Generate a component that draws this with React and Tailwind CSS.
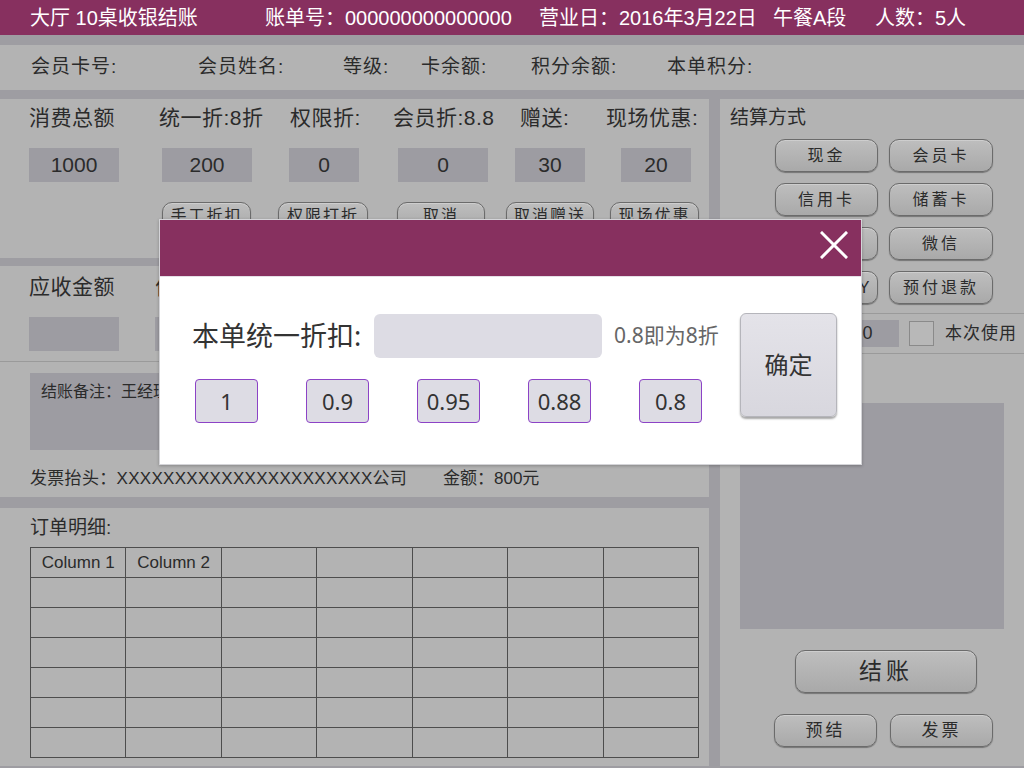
import React from 'react';

const bg = "font-['Liberation_Sans','Noto_Sans_CJK_SC',sans-serif]";
const modalFont = "font-['Noto_Sans','Noto_Sans_CJK_SC',sans-serif]";

function Pill({ children, className = '' }) {
  return (
    <div className={`flex items-center justify-center rounded-[10px] border border-[#6b6b6b] bg-gradient-to-b from-[#bebebe] to-[#a9a9a9] shadow-[0_1px_1px_rgba(0,0,0,0.35),inset_0_1px_0_rgba(255,255,255,0.25)] text-[#2b2b2b] ${className}`}>
      {children}
    </div>
  );
}

function ValueBox({ w, ml, children }) {
  return (
    <div className={`${w} ${ml} h-[34px] bg-[#9d9ca2] flex items-center justify-center text-[21px] text-[#2b2b2b]`}>{children}</div>
  );
}

export default function App() {
  const presets = ['1', '0.9', '0.95', '0.88', '0.8'];
  const rows = Array.from({ length: 7 });
  const cols = Array.from({ length: 7 });

  return (
    <div className={`relative w-[1024px] h-[768px] overflow-hidden bg-[#9e9da2] ${bg}`}>
      {/* header bar */}
      <div className="h-[35px] bg-[#87305f] flex items-center pl-[30px] text-white text-[20px] whitespace-nowrap">
        <span className="w-[235px]">大厅 10桌收银结账</span>
        <span className="w-[274px]">账单号：000000000000000</span>
        <span className="w-[234px]">营业日：2016年3月22日</span>
        <span className="w-[102px]">午餐A段</span>
        <span>人数：5人</span>
      </div>

      {/* member row */}
      <div className="mt-[10px] h-[45px] bg-[#b3b3b3] flex items-center pl-[31px] text-[19px] text-[#2b2b2b] tracking-[1px] whitespace-nowrap">
        <span className="w-[167px]">会员卡号:</span>
        <span className="w-[145px]">会员姓名:</span>
        <span className="w-[78px]">等级:</span>
        <span className="w-[110px]">卡余额:</span>
        <span className="w-[136px]">积分余额:</span>
        <span>本单积分:</span>
      </div>

      <div className="mt-[9px] flex">
        {/* left column */}
        <div className="w-[709px] flex flex-col">
          {/* panel A */}
          <div className="h-[159px] bg-[#b3b3b3] pt-[8px] text-[#2b2b2b]">
            <div className="flex h-[22px] items-center pl-[29px] text-[21px] tracking-[0.5px] whitespace-nowrap">
              <span className="w-[130px]">消费总额</span>
              <span className="w-[131px]">统一折:8折</span>
              <span className="w-[103px]">权限折:</span>
              <span className="w-[127px]">会员折:8.8</span>
              <span className="w-[86px]">赠送:</span>
              <span>现场优惠:</span>
            </div>
            <div className="mt-[19px] flex">
              <ValueBox w="w-[90px]" ml="ml-[29px]">1000</ValueBox>
              <ValueBox w="w-[90px]" ml="ml-[43px]">200</ValueBox>
              <ValueBox w="w-[70px]" ml="ml-[37px]">0</ValueBox>
              <ValueBox w="w-[90px]" ml="ml-[39px]">0</ValueBox>
              <ValueBox w="w-[70px]" ml="ml-[27px]">30</ValueBox>
              <ValueBox w="w-[70px]" ml="ml-[36px]">20</ValueBox>
            </div>
            <div className="mt-[20px] flex text-[16px] tracking-[2px]">
              <Pill className="ml-[162px] w-[89px] h-[28px]">手工折扣</Pill>
              <Pill className="ml-[27px] w-[90px] h-[28px]">权限打折</Pill>
              <Pill className="ml-[29px] w-[88px] h-[28px]">取消</Pill>
              <Pill className="ml-[21px] w-[88px] h-[28px]">取消赠送</Pill>
              <Pill className="ml-[16px] w-[89px] h-[28px]">现场优惠</Pill>
            </div>
          </div>

          {/* panel B */}
          <div className="mt-[8px] h-[231px] bg-[#b3b3b3] text-[#2b2b2b]">
            <div className="border-b border-[#9a9a9a] pb-[10px]">
              <div className="pt-[10px] flex h-[32px] items-end pl-[29px] text-[21px] tracking-[0.5px]">
                <span className="w-[126px] leading-[22px]">应收金额</span>
                <span className="leading-[22px]">优惠金额</span>
              </div>
              <div className="mt-[19px] flex">
                <ValueBox w="w-[90px]" ml="ml-[29px]"></ValueBox>
                <ValueBox w="w-[90px]" ml="ml-[36px]"></ValueBox>
              </div>
            </div>
            <div className="mt-[11px] ml-[30px] w-[669px] h-[77px] bg-[#9d9ca2] pl-[11px] pt-[8px] text-[16px] leading-[22px]">
              结账备注：王经理签单
            </div>
            <div className="mt-[18px] flex pl-[30px] text-[17px] leading-[22px] whitespace-nowrap">
              <span className="w-[413px] tracking-[0.3px]">发票抬头：XXXXXXXXXXXXXXXXXXXXXX公司</span>
              <span>金额：800元</span>
            </div>
          </div>

          {/* panel C */}
          <div className="mt-[11px] h-[258px] bg-[#b3b3b3] pt-[9px] pl-[30px] text-[#2b2b2b]">
            <div className="text-[19px] leading-[22px]">订单明细:</div>
            <table className="mt-[8px] w-[669px] table-fixed border-collapse">
              <tbody>
                {rows.map((_, r) => (
                  <tr key={r} className="h-[30px]">
                    {cols.map((_, c) => (
                      <td key={c} className="border border-[#4d4d4d] p-0 text-center text-[17px]">
                        {r === 0 && c === 0 ? 'Column 1' : r === 0 && c === 1 ? 'Column 2' : ''}
                      </td>
                    ))}
                  </tr>
                ))}
              </tbody>
            </table>
          </div>
        </div>

        {/* right column */}
        <div className="ml-[11px] w-[304px] h-[667px] bg-[#b3b3b3] pt-[8px] text-[#2b2b2b]">
          <div className="pl-[10px] text-[19px] leading-[22px]">结算方式</div>
          <div className="mt-[10px] ml-[55px] grid grid-cols-[103px_104px] gap-x-[11px] gap-y-[11px] text-[16px] tracking-[3px]">
            <Pill className="h-[33px]">现金</Pill>
            <Pill className="h-[33px]">会员卡</Pill>
            <Pill className="h-[33px]">信用卡</Pill>
            <Pill className="h-[33px]">储蓄卡</Pill>
            <Pill className="h-[33px]">支付宝</Pill>
            <Pill className="h-[33px]">微信</Pill>
            <Pill className="h-[33px] tracking-normal">APPLE PAY</Pill>
            <Pill className="h-[33px]">预付退款</Pill>
          </div>
          <div className="mt-[9px] border-t border-[#9a9a9a]"></div>
          <div className="mt-[6px] flex items-center h-[27px]">
            <span className="ml-[10px] w-[106px] text-[16px]">积分抵扣：</span>
            <div className="w-[63px] h-[27px] bg-[#9d9ca2] flex items-center justify-center text-[18px]">0</div>
            <div className="ml-[10px] w-[25px] h-[25px] border border-[#8a8a8a] bg-[#b8b8b8]"></div>
            <span className="ml-[11px] text-[17px] tracking-[1px]">本次使用</span>
          </div>
          <div className="mt-[6px] border-t border-[#9a9a9a]"></div>
          <div className="mt-[49px] ml-[20px] w-[264px] h-[226px] bg-[#9d9ca2]"></div>
          <Pill className="mt-[21px] ml-[75px] w-[182px] h-[43px] text-[23px] tracking-[4px]">结账</Pill>
          <div className="mt-[21px] ml-[54px] flex gap-[13px] text-[17px] tracking-[3px]">
            <Pill className="w-[103px] h-[33px]">预结</Pill>
            <Pill className="w-[103px] h-[33px]">发票</Pill>
          </div>
        </div>
      </div>

      {/* discount dialog */}
      <div className={`absolute left-[159px] top-[219px] w-[703px] h-[246px] bg-white border border-[#d4d4d8] shadow-[0_1px_3px_rgba(0,0,0,0.25)] ${modalFont}`}>
        <div className="h-[57px] bg-[#87305f] border-b border-[#e4dfe6] flex justify-end items-start pt-[11px] pr-[13px]">
          <svg width="28" height="28" viewBox="0 0 28 28">
            <path d="M2 2 L26 26 M26 2 L2 26" stroke="white" strokeWidth="3" strokeLinecap="square" />
          </svg>
        </div>
        <div className="flex">
          <div className="flex-1 pl-[32px] pt-[37px]">
            <div className="flex items-center h-[44px]">
              <span className="w-[182px] text-[27px] text-[#333] whitespace-nowrap">本单统一折扣:</span>
              <div className="w-[228px] h-[44px] rounded-[6px] bg-[#dddce4]"></div>
              <span className="ml-[12px] text-[21px] text-[#666] whitespace-nowrap">0.8即为8折</span>
            </div>
            <div className="mt-[21px] ml-[3px] flex gap-[48px]">
              {presets.map(p => (
                <div key={p} className="w-[63px] h-[44px] rounded-[4px] border border-[#8c43c6] bg-[#dddce4] flex items-center justify-center text-[22px] text-[#333]">
                  {p}
                </div>
              ))}
            </div>
          </div>
          <div className="mt-[36px] mr-[24px] w-[97px] h-[104px] rounded-[6px] border border-[#b5b5bb] bg-gradient-to-b from-[#e4e3e9] to-[#d8d7de] shadow-[0_2px_2px_rgba(0,0,0,0.35)] flex items-center justify-center text-[24px] text-[#333]">
            确定
          </div>
        </div>
      </div>
    </div>
  );
}
